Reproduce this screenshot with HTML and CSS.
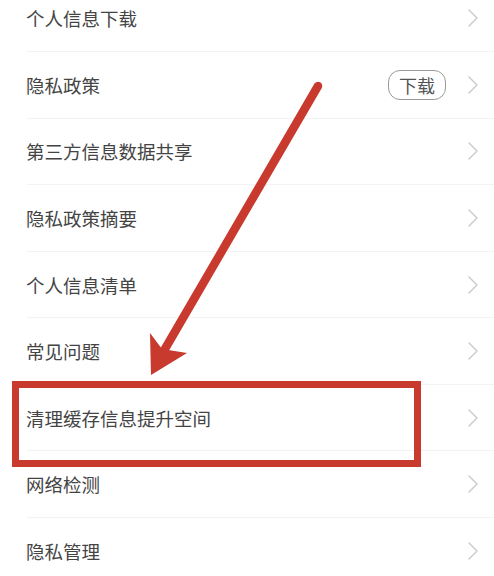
FILE: index.html
```html
<!DOCTYPE html>
<html lang="zh">
<head>
<meta charset="utf-8">
<link rel="stylesheet" href="styles.css">
</head>
<body>
<div class="page">
  <ul class="list">
    <li class="row"><span class="label">个人信息下载</span><svg class="chev" viewBox="0 0 10 18"><polyline points="1,1 9,9 1,17"/></svg></li>
    <li class="row"><span class="label">隐私政策</span><span class="badge">下载</span><svg class="chev" viewBox="0 0 10 18"><polyline points="1,1 9,9 1,17"/></svg></li>
    <li class="row"><span class="label">第三方信息数据共享</span><svg class="chev" viewBox="0 0 10 18"><polyline points="1,1 9,9 1,17"/></svg></li>
    <li class="row"><span class="label">隐私政策摘要</span><svg class="chev" viewBox="0 0 10 18"><polyline points="1,1 9,9 1,17"/></svg></li>
    <li class="row"><span class="label">个人信息清单</span><svg class="chev" viewBox="0 0 10 18"><polyline points="1,1 9,9 1,17"/></svg></li>
    <li class="row"><span class="label">常见问题</span><svg class="chev" viewBox="0 0 10 18"><polyline points="1,1 9,9 1,17"/></svg></li>
    <li class="row"><span class="label">清理缓存信息提升空间</span><svg class="chev" viewBox="0 0 10 18"><polyline points="1,1 9,9 1,17"/></svg></li>
    <li class="row"><span class="label">网络检测</span><svg class="chev" viewBox="0 0 10 18"><polyline points="1,1 9,9 1,17"/></svg></li>
    <li class="row"><span class="label">隐私管理</span><svg class="chev" viewBox="0 0 10 18"><polyline points="1,1 9,9 1,17"/></svg></li>
  </ul>
  <div class="highlight"></div>
  <svg class="arrow" width="494" height="576" viewBox="0 0 494 576">
    <line x1="318" y1="86" x2="162" y2="354" stroke="#c8392e" stroke-width="8.5" stroke-linecap="round"/>
    <polygon points="151,375 150,333 162,349 187,353" fill="#c8392e"/>
  </svg>
</div>
</body>
</html>
```
FILE: styles.css
```css
html, body {
  margin: 0;
  padding: 0;
  background: #ffffff;
}
.page {
  position: relative;
  width: 494px;
  height: 576px;
  overflow: hidden;
  font-family: "Noto Sans CJK SC", "Noto Sans", sans-serif;
}
.list {
  list-style: none;
  margin: -14.5px 0 0 0;
  padding: 0;
}
.row {
  box-sizing: border-box;
  height: 66.57px;
  margin-left: 27px;
  border-bottom: 1px solid #f3f3f3;
  display: flex;
  align-items: center;
  padding-right: 16px;
}
.label {
  flex: 1;
  margin-left: -1px;
  font-size: 18.5px;
  color: #444444;
}
.badge {
  box-sizing: border-box;
  width: 58px;
  height: 30px;
  border: 1.5px solid #9a9a9a;
  border-radius: 12px;
  display: flex;
  align-items: center;
  justify-content: center;
  font-size: 18px;
  color: #555555;
  margin-right: 22px;
}
.chev {
  width: 10px;
  height: 18px;
  fill: none;
  stroke: #cccccc;
  stroke-width: 1.5;
  stroke-linecap: round;
  stroke-linejoin: round;
}
.highlight {
  position: absolute;
  left: 12px;
  top: 381px;
  width: 409px;
  height: 86px;
  box-sizing: border-box;
  border: 7.5px solid #c8392e;
}
.arrow {
  position: absolute;
  left: 0;
  top: 0;
}
```
